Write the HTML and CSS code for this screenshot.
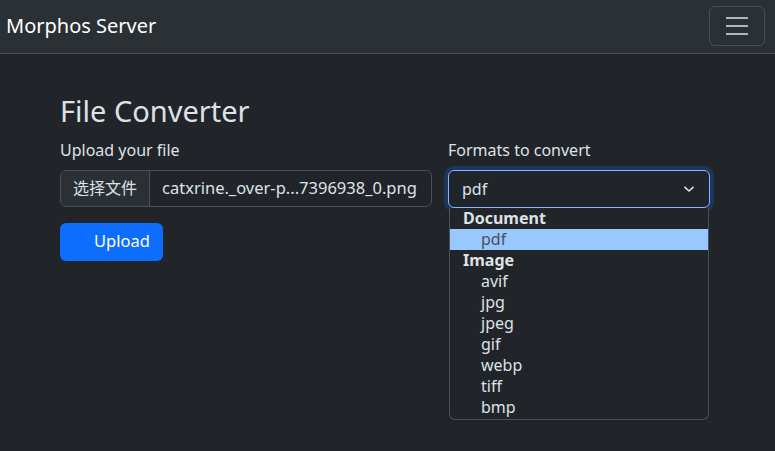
FILE: index.html
```html
<!DOCTYPE html>
<html lang="en">
<head>
<meta charset="utf-8">
<title>Morphos Server</title>
<link rel="stylesheet" href="styles.css">
</head>
<body>
<nav class="navbar">
  <span class="brand">Morphos Server</span>
  <button class="toggler" aria-label="Toggle navigation">
    <svg width="30" height="30" viewBox="0 0 30 30"><path d="M4 7h22M4 15h22M4 23h22" stroke="rgba(222,226,230,0.75)" stroke-width="2" stroke-linecap="butt"/></svg>
  </button>
</nav>
<main class="main">
  <h1 class="title">File Converter</h1>
  <div class="row">
    <div class="col-left">
      <label class="label">Upload your file</label>
      <div class="file-input">
        <span class="file-btn">选择文件</span>
        <span class="file-name">catxrine._over-p...7396938_0.png</span>
      </div>
      <button class="upload">Upload</button>
    </div>
    <div class="col-right">
      <label class="label">Formats to convert</label>
      <div class="select">
        <span>pdf</span>
        <svg class="chev" width="12" height="8" viewBox="0 0 12 8"><path d="M1.5 1.8L6 6l4.5-4.2" fill="none" stroke="#dee2e6" stroke-width="1.6"/></svg>
      </div>
      <div class="dropdown">
        <div class="group">Document</div>
        <div class="opt selected">pdf</div>
        <div class="group">Image</div>
        <div class="opt">avif</div>
        <div class="opt">jpg</div>
        <div class="opt">jpeg</div>
        <div class="opt">gif</div>
        <div class="opt">webp</div>
        <div class="opt">tiff</div>
        <div class="opt">bmp</div>
      </div>
    </div>
  </div>
</main>
</body>
</html>
```
FILE: styles.css
```css
* { box-sizing: border-box; }
html, body { margin: 0; }
body {
  background: #212529;
  color: #dee2e6;
  font-family: "Noto Sans", "Noto Sans CJK SC", sans-serif;
  font-size: 16px;
  line-height: 1.5;
  height: 451px;
  overflow: hidden;
}
.navbar {
  height: 54px;
  background: #2b3035;
  border-bottom: 1px solid #495057;
  display: flex;
  align-items: center;
  justify-content: space-between;
  padding: 0 10px 2px 6px;
}
.brand {
  font-size: 20px;
  color: #fff;
  line-height: 1.5;
}
.toggler {
  width: 56px;
  height: 40px;
  background: transparent;
  border: 1px solid rgba(255,255,255,0.15);
  border-radius: 6px;
  display: flex;
  align-items: center;
  justify-content: center;
  padding: 0;
}
.main {
  padding: 40px 0 0 60px;
}
.title {
  margin: 0 0 9px;
  font-size: 29px;
  font-weight: 400;
  line-height: 1.2;
  color: #dee2e6;
}
.row {
  display: grid;
  grid-template-columns: 372px 262px;
  column-gap: 16px;
}
.label {
  display: block;
  margin-bottom: 8px;
}
.file-input {
  display: flex;
  height: 37px;
  border: 1px solid #495057;
  border-radius: 6px;
  overflow: hidden;
}
.file-btn {
  background: #2b3035;
  border-right: 1px solid #495057;
  padding: 0 12px;
  display: flex;
  align-items: center;
  font-size: 16px;
}
.file-name {
  padding: 0 12px;
  display: flex;
  align-items: center;
  white-space: nowrap;
  font-size: 16.5px;
}
.upload {
  margin-top: 16px;
  width: 103px;
  height: 38px;
  background: #0d6efd;
  color: #fff;
  border: none;
  border-radius: 6px;
  font: inherit;
  font-size: 16.5px;
  padding: 0 0 0 34px;
  text-align: left;
}
.col-right { position: relative; }
.select {
  height: 38px;
  border: 1px solid #86b7fe;
  border-radius: 6px;
  box-shadow: 0 0 0 4px rgba(13,110,253,0.25);
  display: flex;
  align-items: center;
  justify-content: space-between;
  padding: 0 14px 0 13px;
}
.dropdown {
  position: absolute;
  left: 1px;
  right: 1px;
  top: 70px;
  background: #212529;
  border: 1px solid #495057;
  border-top: none;
  border-radius: 0 0 6px 6px;
  padding-bottom: 1px;
}
.group {
  font-weight: 700;
  line-height: 21px;
  padding-left: 13px;
}
.opt {
  line-height: 21px;
  padding-left: 31px;
}
.opt.selected {
  background: #99c8ff;
  color: #495057;
}
```
